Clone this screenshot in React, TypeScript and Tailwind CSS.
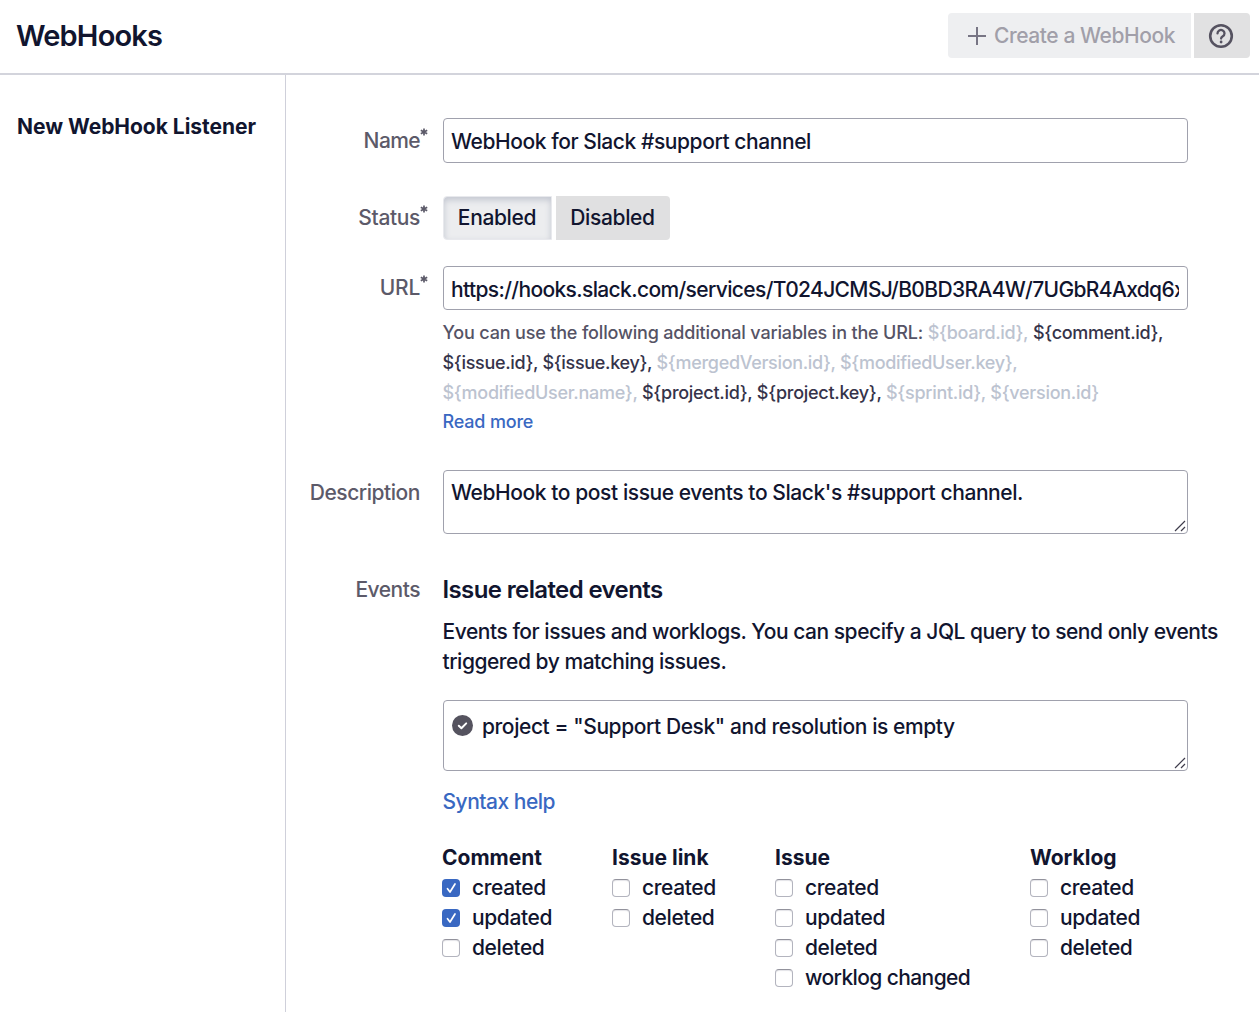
import React from 'react';

function Row({ label, required, pad, spacing, children }: { label: string; required?: boolean; pad: string; spacing: string; children: React.ReactNode }) {
  return (
    <div className="flex">
      <div className={`w-[134px] shrink-0 text-right leading-[30px] text-[#5c5a69] ${pad} ${spacing}`}>
        <span className="relative">
          {label}
          {required && <Asterisk />}
        </span>
      </div>
      <div className="ml-[22.5px] min-w-0 flex-1">{children}</div>
    </div>
  );
}

function Asterisk() {
  return (
    <svg className="absolute -right-2 top-0 size-2" viewBox="0 0 8 8" stroke="#5c5a69" strokeWidth="1.7" aria-label="required">
      <path d="M4 .6v6.8M.8 2.2l6.4 3.6M7.2 2.2.8 5.8" />
    </svg>
  );
}

function Grip() {
  return (
    <svg className="absolute bottom-[1px] right-[1px] size-3" viewBox="0 0 12 12" fill="none" stroke="#3f3d4c" strokeWidth="1.2">
      <path d="M1 11 11 1M7 11l4-4" />
    </svg>
  );
}

function Check({ label, checked, spacing = 'tracking-[-0.4px]' }: { label: string; checked?: boolean; spacing?: string }) {
  return (
    <label className="flex h-[30px] items-center">
      {checked ? (
        <span className="flex size-[18px] shrink-0 items-center justify-center rounded-[4px] bg-[#3968c2]">
          <svg viewBox="0 0 18 18" className="size-[18px]" fill="none" stroke="#fff" strokeWidth="1.7" strokeLinecap="round" strokeLinejoin="round">
            <path d="M5.5 9.7 8 13 13 5" />
          </svg>
        </span>
      ) : (
        <span className="size-[18px] shrink-0 rounded-[4px] border border-[#b3b4be] border-t-[#92929c] bg-white shadow-[inset_0_1px_1px_#e4e4e8]" />
      )}
      <span className={`ml-3 whitespace-nowrap ${spacing}`}>{label}</span>
    </label>
  );
}

function Group({ title, width, children }: { title: string; width: string; children: React.ReactNode }) {
  return (
    <div className={width}>
      <h4 className="h-[30px] font-bold leading-[30px]">{title}</h4>
      {children}
    </div>
  );
}

const field = 'relative w-[745px] rounded-[4px] border-[1.5px] border-[#a0a1ad] bg-white px-[7.5px]';
const off = 'text-[#bcc3d0]';
const on = 'text-[#35334a]';

export default function App() {
  return (
    <div className="flex h-[1012px] w-[1259px] flex-col overflow-hidden bg-white font-['Inter',sans-serif] text-[21px] font-[450] leading-[30px] text-[#11152f]">
      <header className="flex h-[75px] shrink-0 items-start justify-between border-b-2 border-[#d3d4dc] pl-[16px] pr-[9px]">
        <h1 className="mt-[16px] text-[29px] font-[570] leading-[40px] tracking-[-0.84px]">WebHooks</h1>
        <div className="mt-[13px] flex gap-[3px]">
          <button className="flex h-[45px] w-[243px] items-center rounded-l-[4px] bg-[#eeeff1] pl-[20px] font-medium tracking-[-0.44px] text-[#a19fa9]">
            <svg className="mr-[8px] size-[18px]" viewBox="0 0 18 18" stroke="#777584" strokeWidth="2">
              <path d="M9 0v18M0 9h18" />
            </svg>
            Create a WebHook
          </button>
          <button className="flex h-[45px] w-[56px] items-center justify-center rounded-r-[4px] bg-[#e1e1e2]">
            <svg className="mr-[2px] size-[26px]" viewBox="0 0 26 26" fill="none" stroke="#555260" strokeWidth="2.6">
              <circle cx="13" cy="13" r="10.8" />
              <path d="M9.5 10.4a3.5 3.4 0 1 1 5.3 2.9c-1.2.8-1.7 1.2-1.7 2.3" strokeWidth="2.3" strokeLinecap="round" />
              <circle cx="13.1" cy="19" r="1.4" fill="#555260" stroke="none" />
            </svg>
          </button>
        </div>
      </header>
      <div className="flex min-h-0 flex-1">
        <aside className="w-[286px] shrink-0 border-r-[1.5px] border-[#cfd0da] pl-[17px] pt-[37px] font-bold">
          <span className="whitespace-nowrap tracking-[-0.03px]">New WebHook Listener</span>
        </aside>
        <main className="flex-1 pt-[43px]">
          <Row label="Name" required pad="pt-[8px]" spacing="tracking-[-0.6px]">
            <div className={`${field} h-[45px] pt-[8px] tracking-[-0.43px]`}>WebHook for Slack #support channel</div>
          </Row>
          <div className="h-[33px]" />
          <Row label="Status" required pad="pt-[7px]" spacing="tracking-[-0.35px]">
            <div className="flex gap-1 tracking-[-0.35px]">
              <span className="flex h-[44px] w-[109px] items-center justify-center rounded-l-[4px] border border-[#e8e9ed] bg-[#ecedef] shadow-[inset_0_3px_6px_#c2c6d0]">Enabled</span>
              <span className="flex h-[44px] w-[114px] items-center justify-center rounded-r-[4px] bg-[#e0e0e1]">Disabled</span>
            </div>
          </Row>
          <div className="h-[26px]" />
          <Row label="URL" required pad="pt-[7px]" spacing="tracking-[-0.3px]">
            <div className={`${field} h-[44px] pt-[8px]`}>
              <input
                readOnly
                className="block h-[30px] w-full bg-transparent tracking-[-0.64px] outline-none"
                value="https://hooks.slack.com/services/T024JCMSJ/B0BD3RA4W/7UGbR4Axdq6x"
              />
            </div>
            <div className="mt-[8px] whitespace-nowrap text-[18px] leading-[29.8px] text-[#555365]">
              <p className="tracking-[-0.17px]">You can use the following additional variables in the URL: <span className={`${off} tracking-[-0.32px]`}>{'${board.id},'}</span> <span className={`${on} tracking-[-0.32px]`}>{'${comment.id},'}</span></p>
              <p className="tracking-[-0.32px]"><span className={on}>{'${issue.id}, ${issue.key},'}</span> <span className={off}>{'${mergedVersion.id}, ${modifiedUser.key},'}</span></p>
              <p className="tracking-[-0.28px]"><span className={off}>{'${modifiedUser.name},'}</span> <span className={on}>{'${project.id}, ${project.key},'}</span> <span className={off}>{'${sprint.id}, ${version.id}'}</span></p>
              <p className="tracking-[-0.18px]"><a className="text-[#3968c2]">Read more</a></p>
            </div>
          </Row>
          <div className="h-[33px]" />
          <Row label="Description" pad="pt-[8px]" spacing="tracking-[-0.46px]">
            <div className={`${field} h-[64px] pt-[7px] tracking-[-0.42px]`}>
              WebHook to post issue events to Slack's #support channel.
              <Grip />
            </div>
          </Row>
          <div className="h-[40px]" />
          <Row label="Events" pad="pt-px" spacing="tracking-[-0.5px]">
            <h2 className="h-[43px] text-[24px] font-[570] leading-[32px] tracking-[-0.62px]">Issue related events</h2>
            <p className="whitespace-nowrap tracking-[-0.47px]">Events for issues and worklogs. You can specify a JQL query to send only events<br />triggered by matching issues.</p>
            <div className={`${field} mt-[23px] flex h-[71px] pt-[11px] tracking-[-0.42px]`}>
              <svg className="ml-[1px] mr-[9px] mt-[3px] size-[21px]" viewBox="0 0 21 21" fill="none">
                <circle cx="10.5" cy="10.5" r="10.5" fill="#55535f" />
                <path d="m6.8 10.7 2.6 2.5 4.8-4.8" stroke="#fff" strokeWidth="2" strokeLinecap="round" strokeLinejoin="round" />
              </svg>
              project = "Support Desk" and resolution is empty
              <Grip />
            </div>
            <p className="mt-[16px]"><a className="tracking-[-0.5px] text-[#3968c2]">Syntax help</a></p>
            <div className="-ml-[0.5px] mt-[26px] flex">
              <Group title="Comment" width="w-[170px]">
                <Check label="created" checked />
                <Check label="updated" checked />
                <Check label="deleted" />
              </Group>
              <Group title="Issue link" width="w-[163px]">
                <Check label="created" />
                <Check label="deleted" />
              </Group>
              <Group title="Issue" width="w-[255px]">
                <Check label="created" />
                <Check label="updated" />
                <Check label="deleted" />
                <Check label="worklog changed" spacing="tracking-[-0.6px]" />
              </Group>
              <Group title="Worklog" width="w-[140px]">
                <Check label="created" />
                <Check label="updated" />
                <Check label="deleted" />
              </Group>
            </div>
          </Row>
        </main>
      </div>
    </div>
  );
}
